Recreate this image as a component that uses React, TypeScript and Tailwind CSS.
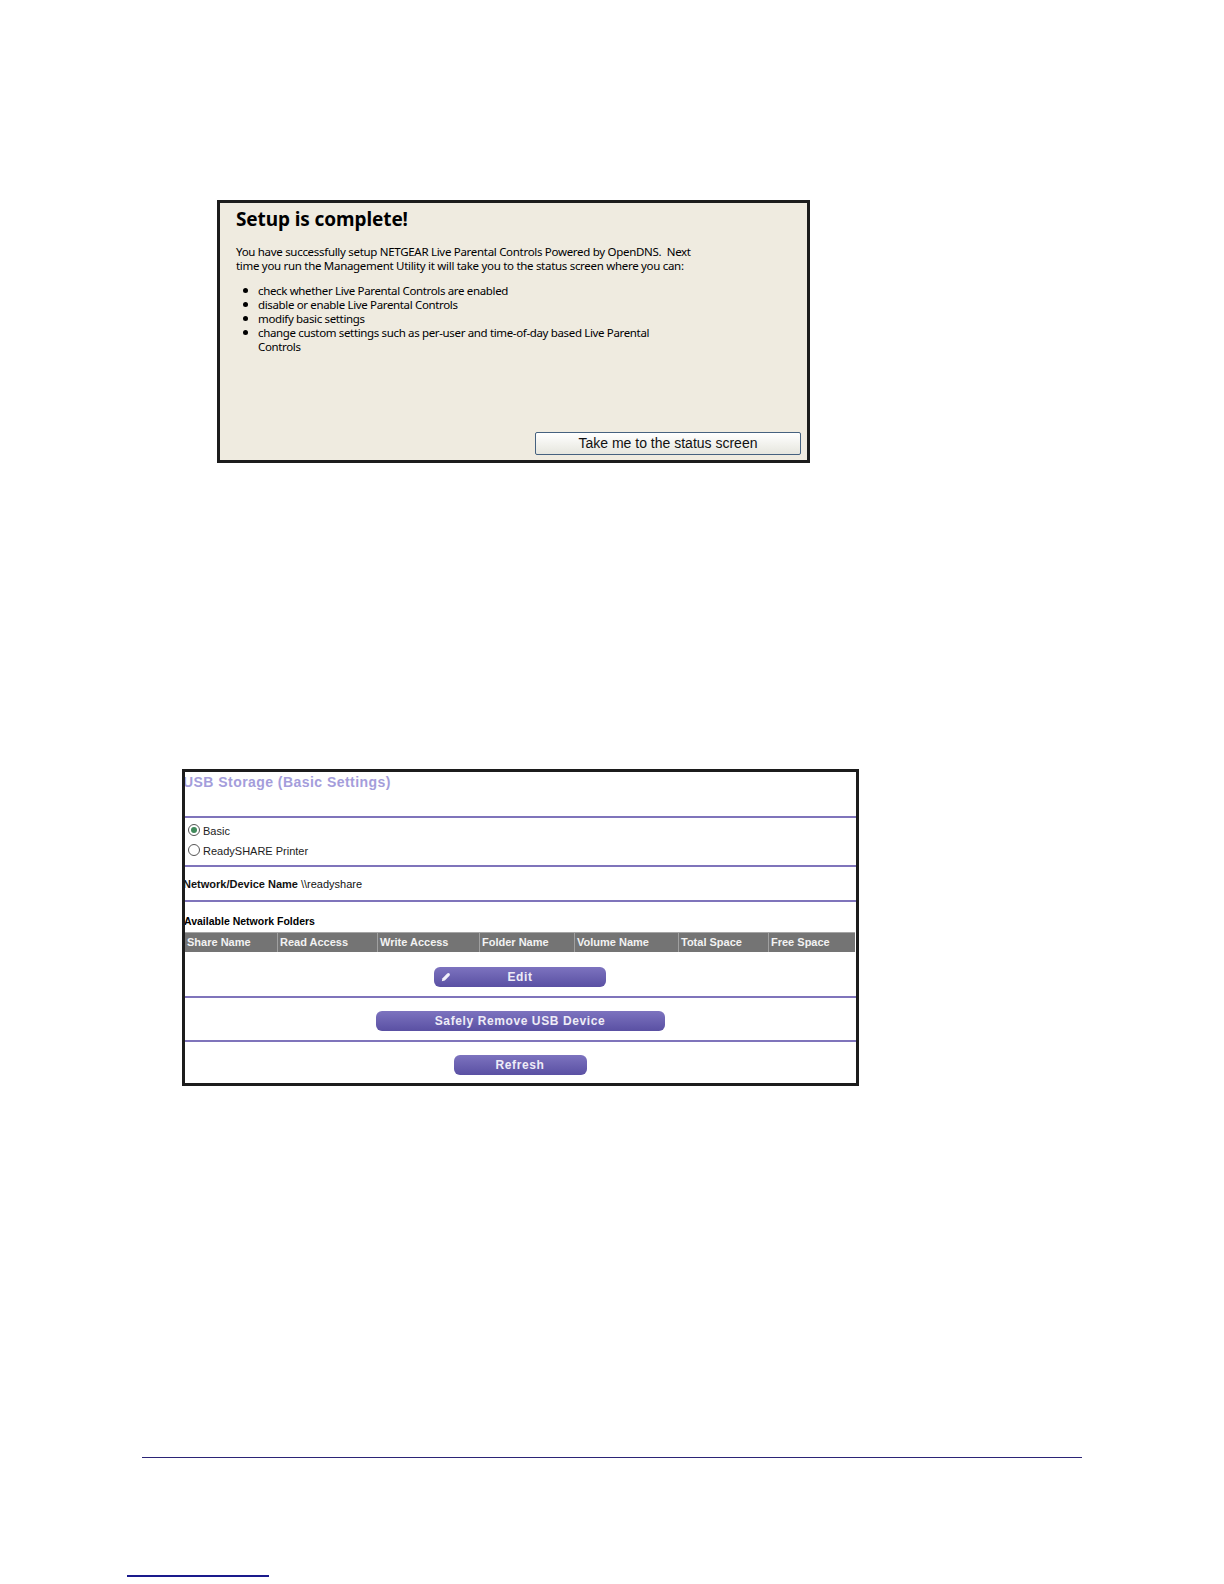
const columns = [
  { label: "Share Name", w: "w-[92px]" },
  { label: "Read Access", w: "w-[100px]" },
  { label: "Write Access", w: "w-[102px]" },
  { label: "Folder Name", w: "w-[95px]" },
  { label: "Volume Name", w: "w-[104px]" },
  { label: "Total Space", w: "w-[90px]" },
  { label: "Free Space", w: "w-[87px]" },
];

const bullets = [
  ["check whether Live Parental Controls are enabled"],
  ["disable or enable Live Parental Controls"],
  ["modify basic settings"],
  ["change custom settings such as per-user and time-of-day based Live Parental", "Controls"],
];

const btn =
  "flex h-[20px] items-center justify-center rounded-[6px] bg-gradient-to-b from-[#7d73bf] to-[#5a50a3] text-[12px] font-bold tracking-[0.6px] text-[#eeecf7]";

function Rule() {
  return <div className="h-[2px] bg-[#7f74bb]" />;
}

export default function App() {
  return (
    <div className="h-[1584px] w-[1224px] overflow-hidden bg-white font-['Liberation_Sans',sans-serif]">
      <div className="pt-[200px]">
        <div className="ml-[217px] flex h-[263px] w-[593px] flex-col border-[3px] border-[#1c1c1c] bg-[#efebe0] text-black">
          <div className="pl-[16px] pt-[4px] font-['Noto_Sans',sans-serif]">
            <h1 className="text-[19px] font-bold leading-[24px] tracking-[-0.1px]">Setup is complete!</h1>
            <div className="mt-[14px] text-[11.5px] leading-[14px] tracking-[-0.3px] whitespace-pre">
              <p>{"You have successfully setup NETGEAR Live Parental Controls Powered by OpenDNS.  Next"}</p>
              <p>time you run the Management Utility it will take you to the status screen where you can:</p>
            </div>
            <ul className="mt-[11px] text-[11.5px] leading-[13.9px] tracking-[-0.35px]">
              {bullets.map((lines) => (
                <li key={lines[0]} className="relative pl-[22px]">
                  <span className="absolute left-[7px] top-[4px] h-[5px] w-[5px] rounded-full bg-black" />
                  {lines.map((l) => (
                    <p key={l} className="whitespace-nowrap">{l}</p>
                  ))}
                </li>
              ))}
            </ul>
          </div>
          <div className="mt-auto flex justify-end pb-[5px] pr-[6px]">
            <div className="flex h-[23px] w-[266px] items-center justify-center rounded-[2px] border border-[#45617f] bg-gradient-to-b from-white to-[#e6e6de] text-[14px] text-[#111]">
              Take me to the status screen
            </div>
          </div>
        </div>

        <div className="ml-[182px] mt-[306px] h-[317px] w-[677px] border-[3px] border-[#1c1c1c] bg-white text-black">
          <div className="h-[44px] overflow-hidden whitespace-nowrap text-[14px] font-bold leading-[20px] tracking-[0.45px] text-[#a49ddb]">
            <span className="-ml-[2px] inline-block">USB Storage (Basic Settings)</span>
          </div>
          <Rule />
          <div className="flex h-[47px] flex-col pl-[3px] pt-[3px] text-[11px] text-[#222]">
            <div className="flex h-[20px] items-center gap-[3px]">
              <span className="-mt-[3px] flex h-[12px] w-[12px] items-center justify-center rounded-full border border-[#555] bg-white">
                <span className="h-[6px] w-[6px] rounded-full bg-[#3f8a5a]" />
              </span>
              Basic
            </div>
            <div className="flex h-[20px] items-center gap-[3px]">
              <span className="-mt-[3px] h-[12px] w-[12px] rounded-full border border-[#555] bg-white" />
              ReadySHARE Printer
            </div>
          </div>
          <Rule />
          <div className="flex h-[33px] items-center overflow-hidden whitespace-nowrap pt-[1px] text-[11px] text-[#111]">
            <span className="-ml-[2px] font-bold">Network/Device Name</span>
            <span className="ml-[3px]">\\readyshare</span>
          </div>
          <Rule />
          <div className="h-[94px] pt-[12px]">
            <div className="h-[14px] overflow-hidden whitespace-nowrap text-[10.5px] font-bold leading-[14px]">
              <span className="-ml-[1px] inline-block">Available Network Folders</span>
            </div>
            <div className="mt-[4px] flex h-[20px] w-[670px] border-t border-[#a5a5a5] bg-[#747474]">
              {columns.map((c, i) => (
                <div
                  key={c.label}
                  className={`${c.w} flex items-center whitespace-nowrap pl-[2px] text-[11px] font-bold text-[#f2f2f2] ${i > 0 ? "border-l border-[#a0a0a0]" : ""}`}
                >
                  {c.label}
                </div>
              ))}
            </div>
            <div className="flex justify-center pr-[1px] pt-[15px]">
              <div className={`${btn} relative w-[172px]`}>
                <svg viewBox="0 0 10 10" className="absolute left-[7px] top-[5px] h-[10px] w-[10px]">
                  <path d="M0.8 9.2 L1.5 6.2 L6.2 1.5 Q7.4 0.6 8.5 1.5 Q9.4 2.6 8.5 3.8 L3.8 8.5 Z" fill="#f2f0fa" />
                </svg>
                Edit
              </div>
            </div>
          </div>
          <Rule />
          <div className="flex h-[42px] justify-center pr-[1px] pt-[13px]">
            <div className={`${btn} w-[289px]`}>Safely Remove USB Device</div>
          </div>
          <Rule />
          <div className="flex h-[41px] justify-center pr-[1px] pt-[13px]">
            <div className={`${btn} w-[133px]`}>Refresh</div>
          </div>
        </div>

        <div className="ml-[142px] mt-[371px] h-[1px] w-[940px] bg-[#2b2476]" />
        <div className="ml-[127px] mt-[117px] h-[2px] w-[142px] bg-[#1a1a8c]" />
      </div>
    </div>
  );
}
